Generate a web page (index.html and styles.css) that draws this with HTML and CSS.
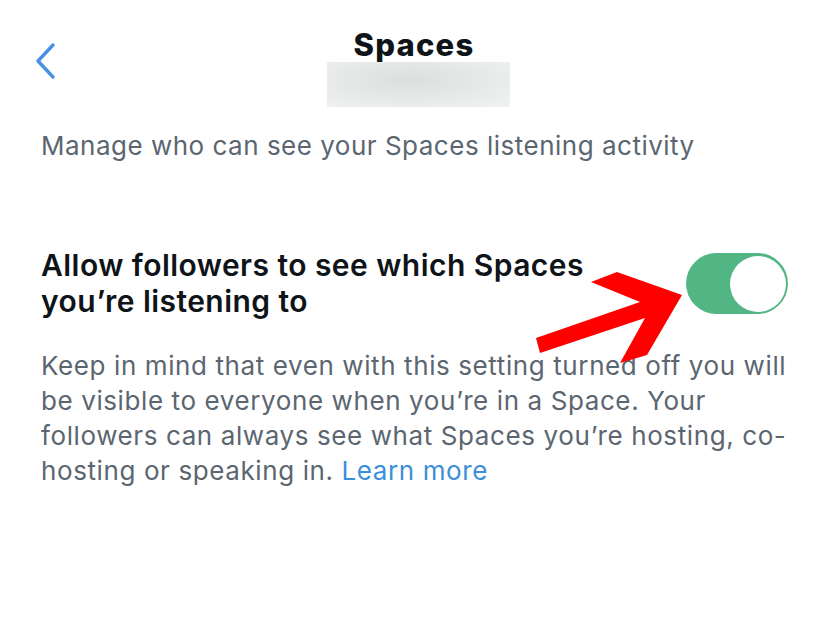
FILE: index.html
```html
<!DOCTYPE html>
<html lang="en">
<head>
<meta charset="utf-8">
<title>Spaces</title>
<link rel="stylesheet" href="styles.css">
</head>
<body>
<div class="page">
  <header class="topbar">
    <div class="back">
      <svg width="22" height="36" viewBox="0 0 22 36"><path d="M18 2 L3 18 L18 34" fill="none" stroke="#4a90e2" stroke-width="3.4" stroke-linecap="round" stroke-linejoin="round"/></svg>
    </div>
    <div class="titlebox">
      <h1 class="title">Spaces</h1>
      <div class="redact"></div>
    </div>
    <div class="spacer"></div>
  </header>

  <p class="intro">Manage who can see your Spaces listening activity</p>

  <section class="setting">
    <div class="row">
      <h2 class="label">Allow followers to see which Spaces<br>you’re listening to</h2>
      <div class="toggle"><div class="knob"></div></div>
    </div>
    <p class="desc">Keep in mind that even with this setting turned off you will<br>be visible to everyone when you’re in a Space. Your<br>followers can always see what Spaces you’re hosting, co-<br>hosting or speaking in. <a class="link" href="#">Learn more</a></p>
  </section>

  <svg class="arrow" width="828" height="641" viewBox="0 0 828 641"><polygon points="591,282 617,272 682,295 647,355 620,363 645,318 540,353 536,338 640,302" fill="#ff0000"/></svg>
</div>
</body>
</html>
```
FILE: styles.css
```css
html, body {
  margin: 0;
  padding: 0;
  background: #ffffff;
}
.page {
  position: relative;
  width: 828px;
  height: 641px;
  overflow: hidden;
  font-family: "Inter", "Noto Sans", sans-serif;
}
.topbar {
  display: grid;
  grid-template-columns: 120px 1fr 120px;
  align-items: start;
  padding-top: 28px;
}
.back {
  padding-left: 35px;
  padding-top: 15px;
}
.back svg { display: block; }
.titlebox {
  display: flex;
  flex-direction: column;
  align-items: center;
}
.title {
  margin: 0;
  font-size: 31px;
  font-weight: 800;
  color: #0f1419;
  line-height: 34px;
  letter-spacing: 1.2px;
}
.redact {
  width: 183px;
  height: 45px;
  margin-left: 9px;
  background: radial-gradient(ellipse at 45% 40%, #dcdddd 0%, #e6e7e7 45%, #f1f2f2 100%);
}
.intro {
  margin: 22px 0 0 41px;
  font-size: 26px;
  line-height: 34px;
  letter-spacing: 0.5px;
  color: #5b6671;
}
.setting {
  margin: 84px 30px 0 41px;
}
.row {
  display: flex;
  justify-content: space-between;
  align-items: flex-start;
  padding-right: 10px;
}
.label {
  margin: 0;
  font-size: 30px;
  font-weight: 600;
  line-height: 36px;
  letter-spacing: 0.45px;
  color: #0f1419;
}
.toggle {
  width: 102px;
  height: 61px;
  border-radius: 31px;
  background: #52b684;
  margin-top: 6px;
  display: flex;
  justify-content: flex-end;
  align-items: center;
  padding-right: 2px;
  box-sizing: border-box;
}
.knob {
  width: 56px;
  height: 56px;
  border-radius: 50%;
  background: #ffffff;
}
.desc {
  margin: 29px 0 0 0;
  font-size: 26px;
  line-height: 35px;
  letter-spacing: 0.6px;
  color: #5b6671;
  white-space: nowrap;
}
.link {
  color: #3b8fd8;
  text-decoration: none;
}
.arrow {
  position: absolute;
  left: 0;
  top: 0;
  pointer-events: none;
}
```
